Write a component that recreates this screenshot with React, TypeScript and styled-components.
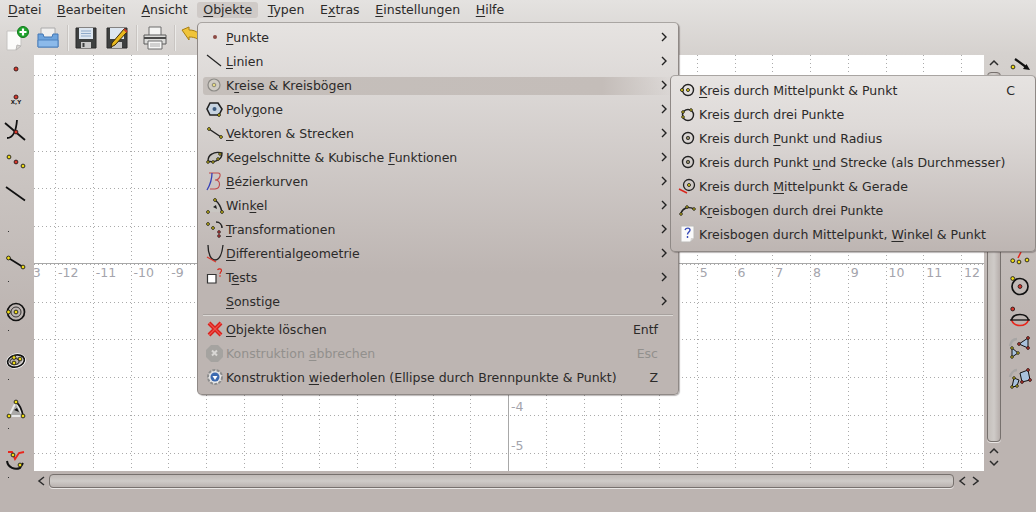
import React from "react";
import styled, { createGlobalStyle } from "styled-components";

const Global = createGlobalStyle`
  html, body { margin: 0; padding: 0; width: 1036px; height: 512px; overflow: hidden; }
  body { font-family: "DejaVu Sans", sans-serif; font-size: 12.5px; color: #2b2a29; }
`;

const Window = styled.div`
  position: relative;
  width: 1036px;
  height: 512px;
  overflow: hidden;
  background: linear-gradient(180deg, #e4e2e0 0, #d5d1ce 55px, #bcb4b1 330px, #bcb4b1 100%);
  display: flex;
  flex-direction: column;
`;
const MenuBar = styled.div`
  height: 20px;
  display: flex;
  align-items: center;
  padding-left: 2px;
`;
const BarItem = styled.div<{ $active?: boolean }>`
  height: 16px;
  line-height: 16px;
  padding: 0 6px;
  margin-right: 3.7px;
  border-radius: 3px;
  white-space: nowrap;
  background: ${(p) => (p.$active ? "#cfcac7" : "transparent")};
`;
const Toolbar = styled.div`
  height: 35px;
  display: flex;
  align-items: center;
  padding-left: 3px;
`;
const ToolButton = styled.div`
  width: 28px;
  height: 28px;
  margin-right: 3px;
  display: flex;
  align-items: center;
  justify-content: center;
`;
const ToolSep = styled.div`
  width: 2px;
  height: 26px;
  margin: 0 3px 0 2px;
  background: linear-gradient(90deg, #c9c5c2 50%, #ecebe9 50%);
`;
const Main = styled.div`
  display: grid;
  grid-template-columns: 34px 950px 20px 32px;
  grid-template-rows: 416px 20px;
`;
const SideBar = styled.div`
  display: flex;
  flex-direction: column;
  align-items: flex-start;
  overflow: visible;
`;
const SideSlot = styled.div<{ $h: number }>`
  height: ${(p) => p.$h}px;
  width: 32px;
  display: flex;
  align-items: center;
  justify-content: center;
  flex-shrink: 0;
`;
const TinyDot = styled.div<{ $h: number; $top: number }>`
  height: ${(p) => p.$h}px;
  width: 17px;
  box-sizing: border-box;
  padding-top: ${(p) => p.$top}px;
  display: flex;
  align-items: flex-start;
  justify-content: center;
  flex-shrink: 0;
  &::after { content: ""; width: 1px; height: 1px; background: #333; }
`;
const Canvas = styled.div`
  background: #fff;
  overflow: hidden;
`;
const VScroll = styled.div`
  display: flex;
  flex-direction: column;
  align-items: center;
  padding: 3px 1px 0 0;
  gap: 2px;
`;
const VThumb = styled.div`
  width: 14px;
  height: 370px;
  margin: 2px 0 2px;
  box-sizing: border-box;
  border: 1px solid #77716e;
  border-radius: 4px;
  background: linear-gradient(90deg, #c4bfbb, #cfcbc8 50%, #b6aeab);
  box-shadow: 0 1px 0 #e9e6e4;
`;
const HScroll = styled.div`
  display: flex;
  align-items: center;
  height: 20px;
  padding-left: 3px;
  gap: 3px;
  grid-column: 2;
`;
const HThumb = styled.div`
  width: 905px;
  height: 14px;
  box-sizing: border-box;
  margin-right: 1px;
  border: 1px solid #77716e;
  border-radius: 4px;
  background: linear-gradient(180deg, #c0bab7, #cfcbc8 50%, #b9b2af);
  box-shadow: 0 1px 0 #e9e6e4;
`;
const Popup = styled.div`
  position: absolute;
  box-sizing: border-box;
  border: 1px solid #8f8986;
  border-top-color: #a9a5a2;
  border-radius: 5px;
  box-shadow: 1px 1px 1px rgba(60, 50, 50, 0.35);
  background: linear-gradient(180deg, #e6e3e1 0, #dbd7d5 70px, #bdb5b2 250px, #bdb5b2 100%);
  z-index: 2;
`;
const MainMenu = styled(Popup)`
  left: 197px;
  top: 22px;
  width: 482px;
  height: 373px;
  padding: 2px 5px;
`;
const SubMenu = styled(Popup)`
  left: 670px;
  top: 75px;
  width: 366px;
  height: 177px;
  padding: 2px 0 0 5px;
  background: linear-gradient(180deg, #e6e3e1 0, #dedad8 50px, #bdb5b2 176px);
  z-index: 3;
`;
const Item = styled.div<{ $hi?: boolean; $off?: boolean }>`
  position: relative;
  height: 24px;
  display: flex;
  align-items: center;
  white-space: nowrap;
  box-sizing: border-box;
  color: ${(p) => (p.$off ? "#92908d" : "inherit")};
  &::before {
    content: "";
    position: absolute;
    inset: 4px 0 2px;
    border-radius: 3px;
    background: ${(p) => (p.$hi ? "linear-gradient(90deg, #c5bfbb 0, #c4bdb9 85%, #c4bdb900 100%)" : "transparent")};
  }
  & > * { position: relative; }
`;
const ItemIcon = styled.div`
  width: 23px;
  height: 22px;
  display: flex;
  align-items: center;
  justify-content: center;
  flex-shrink: 0;
`;
const ItemLabel = styled.div`
  flex: 1;
`;
const Shortcut = styled.div<{ $r: number }>`
  flex-shrink: 0;
  margin-right: ${(p) => p.$r}px;
`;
const Arrow = styled.div`
  width: 18px;
  display: flex;
  justify-content: center;
  flex-shrink: 0;
`;
const Separator = styled.div`
  height: 2px;
  margin: 1px 0;
  background: linear-gradient(180deg, #a7a19e 50%, #dcd9d6 50%);
`;
const Mn = styled.span`
  text-decoration: underline;
  text-underline-offset: 2px;
`;

const Label: React.FC<{ text: string; m?: number }> = ({ text, m }) =>
  m === undefined ? (
    <>{text}</>
  ) : (
    <>
      {text.slice(0, m)}
      <Mn>{text[m]}</Mn>
      {text.slice(m + 1)}
    </>
  );

/* --------------- icon helpers --------------- */
const Y: React.FC<{ x: number; y: number; r?: number }> = ({ x, y, r = 1.9 }) => (
  <circle cx={x} cy={y} r={r} fill="#f0dc14" stroke="#1c1c1c" strokeWidth={0.9} />
);
const R: React.FC<{ x: number; y: number; r?: number }> = ({ x, y, r = 1.9 }) => (
  <circle cx={x} cy={y} r={r} fill="#d8362a" stroke="#2a1a1a" strokeWidth={0.9} />
);
const Ic: React.FC<{ s?: number; children: React.ReactNode }> = ({ s = 22, children }) => (
  <svg width={s} height={s} viewBox="0 0 22 22" fill="none" style={{ overflow: "visible" }}>
    {children}
  </svg>
);

const IcPoint = () => <Ic><R x={11} y={11} r={2} /></Ic>;
const IcPointXY = () => (
  <Ic>
    <R x={11} y={9} r={2} />
    <text x={11} y={16} textAnchor="middle" fontFamily="DejaVu Sans" fontSize={5.5} fontWeight="bold" fill="#222">X,Y</text>
  </Ic>
);
const IcIntersect = () => (
  <Ic>
    <path d="M2 19c5 0 9-5 10-18" stroke="#111" strokeWidth={1.8} />
    <path d="M0 4l20 17" stroke="#111" strokeWidth={1.8} />
    <R x={11} y={13} r={1.9} />
  </Ic>
);
const IcThreeDots = () => (
  <Ic>
    <Y x={4} y={6} /><R x={11} y={11} /><Y x={18} y={15} />
  </Ic>
);
const IcLine = () => <Ic><path d="M1 4l19 13.5" stroke="#111" strokeWidth={1.7} /></Ic>;
const IcSegment = () => (
  <Ic>
    <path d="M3.5 6L18 15" stroke="#111" strokeWidth={1.7} />
    <Y x={3.5} y={6} /><Y x={18} y={15} />
  </Ic>
);
const IcCircle = () => (
  <Ic>
    <circle cx={11} cy={11} r={8.5} stroke="#111" strokeWidth={1.7} />
    <circle cx={11} cy={11} r={5} stroke="#111" strokeWidth={0.8} />
    <Y x={11} y={11} /><Y x={3.5} y={11} />
  </Ic>
);
const IcConic = () => (
  <Ic>
    <ellipse cx={11} cy={11} rx={8.5} ry={6} transform="rotate(-15 11 11)" stroke="#fff" strokeWidth={3} />
    <ellipse cx={11} cy={11} rx={8.5} ry={6} transform="rotate(-15 11 11)" stroke="#111" strokeWidth={1.7} />
    <ellipse cx={9.5} cy={11.5} rx={4.5} ry={3} stroke="#111" strokeWidth={1} />
    <Y x={9} y={7.5} /><Y x={15} y={9} /><Y x={9} y={13} />
  </Ic>
);
const IcAngle = () => (
  <Ic>
    <path d="M4 17L11 3l7 14z" stroke="#e8e8e8" strokeWidth={2} fill="#aaa9a8" />
    <path d="M11 3c4 3 6 8 7 14" stroke="#111" strokeWidth={1.7} />
    <path d="M9 11l3-2 2 4z" fill="#111" />
    <Y x={11} y={3} /><Y x={4} y={17} /><Y x={18} y={17} />
  </Ic>
);
const IcCheck = () => (
  <Ic>
    <path d="M3 4h4l3 7 4-6 5-1" stroke="#e8261c" strokeWidth={1.8} />
    <path d="M2 13c1 7 8 9 13 7l3-5" stroke="#111" strokeWidth={2} />
    <Y x={8} y={7} /><Y x={15} y={17} />
  </Ic>
);
const IcVector = () => (
  <Ic>
    <path d="M6 5l11 8" stroke="#111" strokeWidth={2.2} />
    <path d="M21 16l-7-1 3.5-5z" fill="#111" />
    <Y x={4} y={13} />
  </Ic>
);
const IcThreeY = () => (
  <Ic>
    <path d="M9 11l3-6" stroke="#e8261c" strokeWidth={1.5} />
    <Y x={3.7} y={13.7} /><Y x={10} y={15} /><Y x={18} y={13} />
  </Ic>
);
const IcCircleR = () => (
  <Ic>
    <circle cx={11} cy={10.5} r={8} stroke="#111" strokeWidth={1.7} />
    <R x={11} y={10.5} /><Y x={3.7} y={2.5} />
  </Ic>
);
const IcEllipse = () => (
  <Ic>
    <path d="M2.5 14c1-4 4-5.5 8.5-5.5s7.5 1.5 8.5 5.5" stroke="#111" strokeWidth={1.5} />
    <path d="M2.5 14c1.5 4 4.5 5.5 8.5 5.5s7-1.5 8.5-5.5" stroke="#e8261c" strokeWidth={1.6} />
    <path d="M1 14h20" stroke="#111" strokeWidth={1.3} />
    <R x={3.7} y={3} />
  </Ic>
);
const IcTriA = () => (
  <Ic>
    <path d="M1 10c1-5 4-7 7-7" stroke="#a8a6a5" strokeWidth={2.4} />
    <path d="M10 8l9-6v10z" fill="#a9c2dc" stroke="#111" />
    <path d="M3 12l6 5-6 4z" fill="#a9c2dc" stroke="#111" />
    <R x={19} y={2} r={1.4} /><R x={19} y={12} r={1.4} /><R x={10} y={8} r={1.4} />
    <Y x={3} y={12} r={1.3} /><Y x={3} y={21} r={1.3} /><Y x={9} y={17} r={1.3} />
  </Ic>
);
const IcTriB = () => (
  <Ic>
    <path d="M1 11c1-4 4-7 7-7" stroke="#a8a6a5" strokeWidth={2.4} />
    <path d="M11 7l8-3 2 10-8 2z" fill="#a9c2dc" stroke="#111" />
    <path d="M3 21l2-9 5 2-2 6z" fill="#a9c2dc" stroke="#111" />
    <R x={19} y={4} r={1.4} /><R x={13} y={16} r={1.4} /><R x={21} y={14} r={1.4} />
    <Y x={3} y={21} r={1.3} /><Y x={5} y={12} r={1.3} /><Y x={8} y={20} r={1.3} />
  </Ic>
);

/* toolbar */
const IcNew = () => (
  <svg width={26} height={26} viewBox="0 0 26 26" fill="none">
    <path d="M3 6h14v15l-5 4H3z" fill="#fbfbfa" stroke="#c5c3c1" />
    <path d="M12 25l1-5 4 1z" fill="#d8d6d3" stroke="#b8b6b4" />
    <circle cx={19} cy={7} r={5.5} fill="#1fa32c" stroke="#0f7a1a" />
    <path d="M19 3.5v7M15.5 7h7" stroke="#fff" strokeWidth={2.2} />
  </svg>
);
const IcOpen = () => (
  <svg width={26} height={26} viewBox="0 0 26 26" fill="none">
    <path d="M6 3h14v10H6z" fill="#f0efee" stroke="#aaa" />
    <path d="M3 9h5l1 3h8l1-3h5v13H3z" fill="#6ea4dd" stroke="#4277b5" />
    <path d="M3 15h20v7H3z" fill="#8cbaea" stroke="#4f82bd" />
  </svg>
);
const IcSave = () => (
  <svg width={26} height={26} viewBox="0 0 26 26" fill="none">
    <path d="M3 3h20v20H3z" fill="#3e4040" stroke="#2a2a2a" />
    <path d="M6 3h14v11H6z" fill="#dde6f0" />
    <path d="M8 6h10M8 8.5h10M8 11h10" stroke="#8ea9c9" />
    <path d="M8 17h10v6H8z" fill="#c9c9c9" />
    <path d="M9.5 18h2v4h-2z" fill="#3e4040" />
  </svg>
);
const IcSaveAs = () => (
  <svg width={26} height={26} viewBox="0 0 26 26" fill="none">
    <path d="M3 3h20v20H3z" fill="#3e4040" stroke="#2a2a2a" />
    <path d="M6 3h14v11H6z" fill="#dde6f0" />
    <path d="M8 17h10v6H8z" fill="#c9c9c9" />
    <path d="M20 4L8 18l-1 4 4-2L23 7z" fill="#e8b81c" stroke="#3b2a06" />
    <path d="M20 4l3 3" stroke="#c3402a" strokeWidth={2} />
  </svg>
);
const IcPrint = () => (
  <svg width={26} height={26} viewBox="0 0 26 26" fill="none">
    <path d="M7 2h12v9H7z" fill="#f4f4f3" stroke="#6d6d6d" />
    <path d="M2 10h22v9H2z" fill="#dcdcda" stroke="#5b5b5b" />
    <path d="M2 13h22" stroke="#4a4a4a" strokeWidth={2} />
    <path d="M6 16h14v8H6z" fill="#f7f7f6" stroke="#6d6d6d" />
    <path d="M8 19h10M8 21h10" stroke="#aaa" />
  </svg>
);
const IcUndo = () => (
  <svg width={26} height={26} viewBox="0 0 26 26" fill="none">
    <path d="M2 5l7-3v3c8 0 13 4 12 15-2-6-5-8-12-8v3z" fill="#f0c43a" stroke="#a87e10" />
  </svg>
);

/* menu icons */
const MiPoint = () => <Ic><circle cx={11} cy={11} r={2} fill="#8c4a44" /></Ic>;
const MiLine = () => <Ic><path d="M3 5l14 11" stroke="#222" strokeWidth={1.2} /></Ic>;
const MiCircleGray = () => (
  <Ic>
    <circle cx={10} cy={11} r={6} fill="#d0ccc4" stroke="#8c8a86" strokeWidth={1.2} />
    <circle cx={10} cy={11} r={1.8} fill="#e6db82" stroke="#77756c" strokeWidth={0.8} />
  </Ic>
);
const MiPolygon = () => (
  <Ic>
    <path d="M6 5h8l4 6-3 6H6l-3-6z" fill="#c7d3e0" stroke="#222" strokeWidth={1.6} />
    <circle cx={10.5} cy={11} r={2} fill="#3e5c80" />
    <Y x={15} y={17} r={1.4} />
  </Ic>
);
const MiVector = () => (
  <Ic>
    <path d="M5 7l12 8" stroke="#222" strokeWidth={1.5} />
    <Y x={5} y={7} r={1.4} /><Y x={17} y={15} r={1.4} />
  </Ic>
);
const MiConic = () => (
  <Ic>
    <path d="M4 15c0-3 2-6 4-7 3-2 8-2 10-1 0 3-2 6-4 7-3 2-8 2-10 1z" fill="#c9c6c2" stroke="#222" strokeWidth={1.4} />
    <Y x={4} y={16} r={1.3} /><Y x={9} y={16} r={1.3} /><Y x={14} y={13} r={1.3} /><Y x={16} y={8} r={1.3} />
  </Ic>
);
const MiBezier = () => (
  <Ic>
    <path d="M5 3h9c4 0 2 7-3 7 6 0 6 8 0 9H6" stroke="#c24a4a" strokeWidth={1.1} />
    <path d="M8 3c0 6-2 12-5 17" stroke="#3440b8" strokeWidth={1.3} />
  </Ic>
);
const MiAngle = () => (
  <Ic>
    <path d="M4 18l7-12 7 12z" fill="#c9c6c2" />
    <path d="M11 6c4 3 6 7 7 12" stroke="#222" strokeWidth={1.5} />
    <path d="M9 13l3-2 1 4z" fill="#222" />
    <Y x={4} y={18} r={1.4} /><Y x={11} y={6} r={1.4} /><Y x={18} y={18} r={1.4} />
  </Ic>
);
const MiTrans = () => (
  <Ic>
    <Y x={4} y={6} r={1.4} /><Y x={9} y={10} r={1.4} />
    <path d="M12 4c4 0 6 3 6 6" stroke="#222" strokeWidth={1.5} />
    <circle cx={15} cy={14} r={1.4} fill="#b33" stroke="#222" strokeWidth={0.7} />
    <circle cx={15} cy={18} r={1.4} fill="#b33" stroke="#222" strokeWidth={0.7} />
  </Ic>
);
const MiDiff = () => (
  <Ic>
    <path d="M4 3c0 9 3 15 7 15s7-6 8-15" stroke="#222" strokeWidth={1.3} />
    <path d="M3 15l9 5" stroke="#d83a30" strokeWidth={1.3} />
  </Ic>
);
const MiTest = () => (
  <svg width={22} height={22} viewBox="0 0 22 22" fill="none">
    <path d="M3.5 8.5h8.5v8.5H3.5z" fill="#fff" stroke="#333" strokeWidth={1.2} />
    <path d="M13.5 4c1-1.5 4-1.5 4 .5 0 1.5-1.5 1.5-1.5 3.5M16 9.2v1.5" stroke="#d8261c" strokeWidth={1.2} />
  </svg>
);
const MiDelete = () => (
  <Ic>
    <path d="M5 5l12 12M17 5L5 17" stroke="#d8201c" strokeWidth={4} />
    <path d="M5 5l12 12M17 5L5 17" stroke="#f0504a" strokeWidth={1.2} />
  </Ic>
);
const MiCancel = () => (
  <Ic>
    <path d="M7 3h7l5 5v7l-5 5H7l-5-5V8z" fill="#a5a3a0" />
    <path d="M8 8.5l5 5M13 8.5l-5 5" stroke="#d9d7d5" strokeWidth={2} />
  </Ic>
);
const MiRedo = () => (
  <Ic>
    <circle cx={11} cy={11} r={7} fill="#e8e8e8" stroke="#8d8d8d" strokeDasharray="3 1.3" strokeWidth={2} />
    <circle cx={11} cy={11} r={4.5} fill="#3c6ab0" />
    <path d="M8.5 10h5L11 14z" fill="#fff" />
  </Ic>
);
const SmCircle = () => (
  <Ic>
    <circle cx={11} cy={11} r={5.5} stroke="#222" strokeWidth={1.4} />
    <Y x={11} y={11} r={1.5} /><Y x={5} y={11} r={1.5} />
  </Ic>
);
const SmCircle3 = () => (
  <Ic>
    <circle cx={11} cy={12} r={5.5} stroke="#222" strokeWidth={1.4} />
    <Y x={6} y={9} r={1.3} /><Y x={14} y={7} r={1.3} /><Y x={6} y={14} r={1.3} />
  </Ic>
);
const SmCircleP = () => (
  <Ic>
    <circle cx={11} cy={11} r={5.5} stroke="#222" strokeWidth={1.4} />
    <circle cx={11} cy={11} r={1.7} fill="#8a8460" stroke="#222" strokeWidth={0.8} />
  </Ic>
);
const SmCircleL = () => (
  <Ic>
    <circle cx={12} cy={10} r={5.5} stroke="#222" strokeWidth={1.3} />
    <Y x={12} y={10} r={1.5} />
    <path d="M2 14l8 4" stroke="#d8261c" strokeWidth={1.4} />
  </Ic>
);
const SmArc = () => (
  <Ic>
    <path d="M4 14c2-5 7-7 13-4" stroke="#222" strokeWidth={1.4} />
    <Y x={4} y={15} r={1.3} /><Y x={10} y={8} r={1.3} /><Y x={17} y={10} r={1.3} />
  </Ic>
);
const SmHelp = () => (
  <svg width={22} height={22} viewBox="0 0 22 22" fill="none">
    <path d="M4 3h13v12l-4 4H4z" fill="#fafafa" stroke="#bcbab8" />
    <path d="M13 19l1-4h3z" fill="#d8d6d4" />
    <path d="M8 7c1-2.5 5-2.5 5 0 0 2-2.5 2-2.5 4.5M10.5 13v2" stroke="#3448b8" strokeWidth={1.4} />
  </svg>
);

const ChevRight = () => (
  <svg width={8} height={10} viewBox="0 0 8 10" fill="none">
    <path d="M2 1l4 4-4 4" stroke="#222" strokeWidth={1.4} />
  </svg>
);
const Chev: React.FC<{ d: "l" | "r" | "u" | "v" }> = ({ d }) => {
  const p = { l: "M7 1L2 5l5 4", r: "M3 1l5 4-5 4", u: "M1 7l4-4 4 4", v: "M1 3l4 4 4-4" }[d];
  const w = d === "l" || d === "r" ? 9 : 10;
  return (
    <svg width={w} height={10} viewBox={`0 0 ${w} 10`} fill="none">
      <path d={p} stroke="#2c2c2c" strokeWidth={1.5} />
    </svg>
  );
};

/* canvas */
const GX = 37.75;
const X0 = 21;
const Y0 = 20;
const AX = X0 + 12 * GX;
const AY = Y0 + 5 * GX - 0.5;

const GridChart = () => {
  const xs = Array.from({ length: 26 }, (_, i) => X0 + i * GX);
  const ys = Array.from({ length: 11 }, (_, i) => Y0 + i * GX);
  const xl = [-13, -12, -11, -10, -9, 5, 6, 7, 8, 9, 10, 11, 12];
  return (
    <svg width={950} height={416} viewBox="0 0 950 416">
      {xs.map((x) => (
        <path key={x} d={`M${Math.round(x) + 0.5} 0V416`} stroke="#aaa" strokeDasharray="1 3" />
      ))}
      {ys.map((y) => (
        <path key={y} d={`M0 ${Math.round(y) + 0.5}H950`} stroke="#aaa" strokeDasharray="1 3" />
      ))}
      <path d={`M0 ${Math.round(AY) + 0.5}H950`} stroke="#a8a8a8" />
      <path d={`M${Math.round(AX) + 0.5} 0V416`} stroke="#a8a8a8" />
      <g fontFamily="DejaVu Sans" fontSize={12.5} fill="#a4a4ac">
        {xl.map((n) => (
          <text key={n} x={AX + n * GX + 3} y={AY + 13.5}>
            {n}
          </text>
        ))}
        <text x={AX + 3} y={356}>-4</text>
        <text x={AX + 3} y={395}>-5</text>
      </g>
    </svg>
  );
};

type Row = { t: string; m?: number; i?: React.ReactNode; sc?: string; sub?: boolean; hi?: boolean; off?: boolean };

const rowsA: Row[] = [
  { t: "Punkte", m: 0, i: <MiPoint />, sub: true },
  { t: "Linien", m: 0, i: <MiLine />, sub: true },
  { t: "Kreise & Kreisbögen", m: 1, i: <MiCircleGray />, sub: true, hi: true },
  { t: "Polygone", m: 4, i: <MiPolygon />, sub: true },
  { t: "Vektoren & Strecken", m: 0, i: <MiVector />, sub: true },
  { t: "Kegelschnitte & Kubische Funktionen", m: 25, i: <MiConic />, sub: true },
  { t: "Bézierkurven", m: 0, i: <MiBezier />, sub: true },
  { t: "Winkel", m: 3, i: <MiAngle />, sub: true },
  { t: "Transformationen", m: 0, i: <MiTrans />, sub: true },
  { t: "Differentialgeometrie", m: 0, i: <MiDiff />, sub: true },
  { t: "Tests", m: 1, i: <MiTest />, sub: true },
  { t: "Sonstige", m: 0, sub: true },
];
const rowsB: Row[] = [
  { t: "Objekte löschen", m: 0, i: <MiDelete />, sc: "Entf" },
  { t: "Konstruktion abbrechen", m: 13, i: <MiCancel />, sc: "Esc", off: true },
  { t: "Konstruktion wiederholen (Ellipse durch Brennpunkte & Punkt)", m: 13, i: <MiRedo />, sc: "Z" },
];
const rowsSub: Row[] = [
  { t: "Kreis durch Mittelpunkt & Punkt", m: 0, i: <SmCircle />, sc: "C" },
  { t: "Kreis durch drei Punkte", m: 6, i: <SmCircle3 /> },
  { t: "Kreis durch Punkt und Radius", m: 12, i: <SmCircleP /> },
  { t: "Kreis durch Punkt und Strecke (als Durchmesser)", m: 18, i: <SmCircleP /> },
  { t: "Kreis durch Mittelpunkt & Gerade", m: 12, i: <SmCircleL /> },
  { t: "Kreisbogen durch drei Punkte", m: 1, i: <SmArc /> },
  { t: "Kreisbogen durch Mittelpunkt, Winkel & Punkt", m: 30, i: <SmHelp /> },
];

const MenuRow: React.FC<{ r: Row; scRight?: number }> = ({ r, scRight = 15 }) => (
  <Item $hi={r.hi} $off={r.off}>
    <ItemIcon>{r.i}</ItemIcon>
    <ItemLabel><Label text={r.t} m={r.m} /></ItemLabel>
    {r.sc && <Shortcut $r={scRight}>{r.sc}</Shortcut>}
    {r.sub && <Arrow><ChevRight /></Arrow>}
  </Item>
);

const pairs: React.ReactNode[] = [<IcSegment />, <IcCircle />, <IcConic />, <IcAngle />, <IcCheck />];

export default function App() {
  const bar: [string, number][] = [
    ["Datei", 0], ["Bearbeiten", 0], ["Ansicht", 0], ["Objekte", 0],
    ["Typen", 0], ["Extras", 1], ["Einstellungen", 0], ["Hilfe", 0],
  ];
  return (
    <Window>
      <Global />
      <MenuBar>
        {bar.map(([t, m]) => (
          <BarItem key={t} $active={t === "Objekte"}><Label text={t} m={m} /></BarItem>
        ))}
      </MenuBar>
      <Toolbar>
        <ToolButton><IcNew /></ToolButton>
        <ToolButton><IcOpen /></ToolButton>
        <ToolSep />
        <ToolButton><IcSave /></ToolButton>
        <ToolButton><IcSaveAs /></ToolButton>
        <ToolSep />
        <ToolButton><IcPrint /></ToolButton>
        <ToolSep />
        <ToolButton><IcUndo /></ToolButton>
      </Toolbar>
      <Main>
        <SideBar>
          <SideSlot $h={28}><IcPoint /></SideSlot>
          <SideSlot $h={32}><IcPointXY /></SideSlot>
          <SideSlot $h={30}><IcIntersect /></SideSlot>
          <SideSlot $h={33}><IcThreeDots /></SideSlot>
          <SideSlot $h={32}><IcLine /></SideSlot>
          <TinyDot $h={41} $top={21} />
          {pairs.map((ic, i) => (
            <React.Fragment key={i}>
              <SideSlot $h={24}>{ic}</SideSlot>
              <TinyDot $h={25} $top={6} />
            </React.Fragment>
          ))}
        </SideBar>
        <Canvas><GridChart /></Canvas>
        <VScroll>
          <Chev d="u" />
          <VThumb />
          <Chev d="u" />
          <Chev d="v" />
        </VScroll>
        <SideBar>
          <SideSlot $h={20}><IcVector /></SideSlot>
          <SideSlot $h={168} />
          <SideSlot $h={29}><IcThreeY /></SideSlot>
          <SideSlot $h={30}><IcCircleR /></SideSlot>
          <SideSlot $h={30}><IcEllipse /></SideSlot>
          <SideSlot $h={30}><IcTriA /></SideSlot>
          <SideSlot $h={30}><IcTriB /></SideSlot>
        </SideBar>
        <HScroll>
          <Chev d="l" />
          <HThumb />
          <Chev d="l" />
          <Chev d="r" />
        </HScroll>
      </Main>
      <MainMenu>
        {rowsA.map((r) => <MenuRow key={r.t} r={r} />)}
        <Separator />
        {rowsB.map((r) => <MenuRow key={r.t} r={r} />)}
      </MainMenu>
      <SubMenu>
        {rowsSub.map((r) => <MenuRow key={r.t} r={r} scRight={20} />)}
      </SubMenu>
    </Window>
  );
}
